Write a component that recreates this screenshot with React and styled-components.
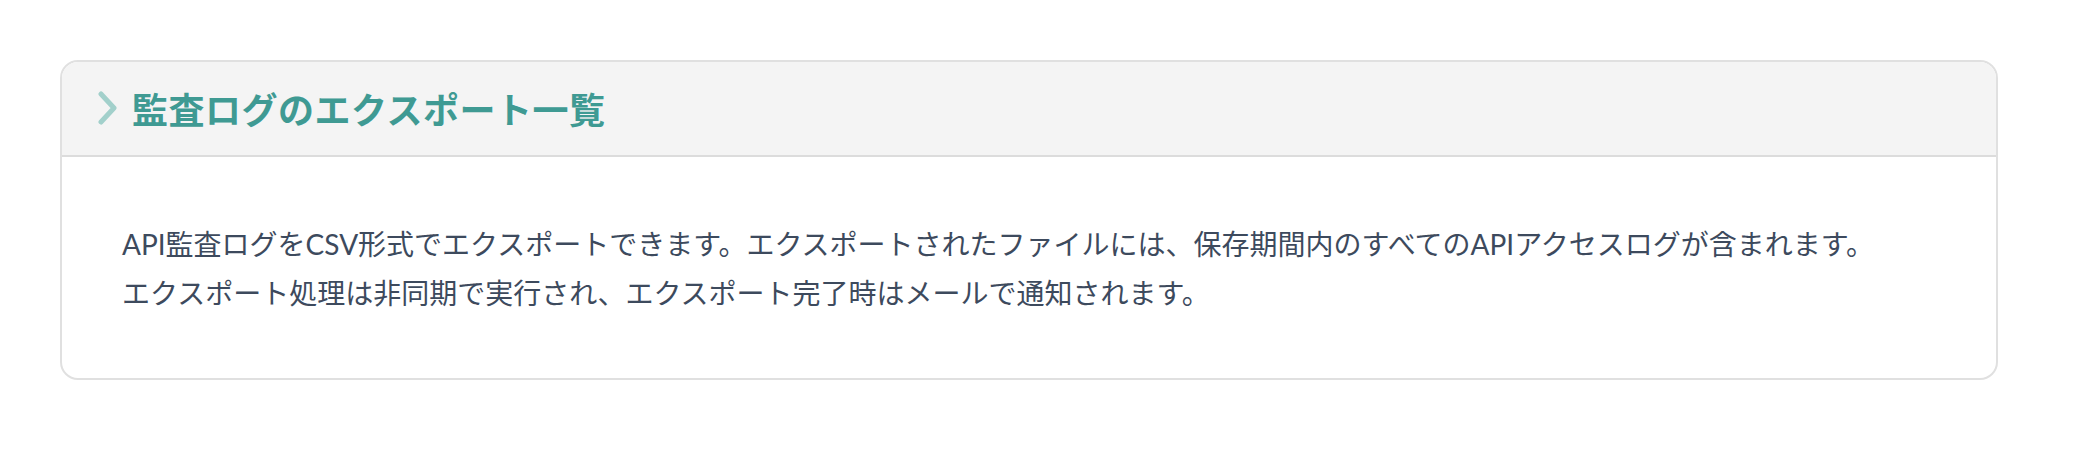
import React from 'react';
import styled, { createGlobalStyle } from 'styled-components';

const GlobalStyle = createGlobalStyle`
  body {
    margin: 0;
    background: #ffffff;
    font-family: Lato, "Noto Sans CJK JP", sans-serif;
  }
`;

const Page = styled.main`
  padding: 60px 88px 60px 60px;
`;

const Card = styled.section`
  border: 2px solid #e0e0e0;
  border-radius: 18px;
  overflow: hidden;
  background: #ffffff;
`;

const Header = styled.header`
  display: flex;
  align-items: center;
  gap: 14px;
  height: 95px;
  padding: 0 0 2px 36px;
  box-sizing: border-box;
  background: #f4f4f4;
  border-bottom: 2px solid #dcdcdc;
`;

const Title = styled.h3`
  margin: 0;
  font-size: 36px;
  font-weight: 700;
  letter-spacing: 0.5px;
  color: #3f9a93;
`;

const Body = styled.div`
  padding: 63px 60px 60px 60px;
`;

const Text = styled.p`
  margin: 0;
  font-size: 28px;
  line-height: 49px;
  color: #3d4a5d;
`;

function Chevron() {
  return (
    <svg width="20" height="34" viewBox="0 0 20 34">
      <path d="M3 3 L16 17 L3 31" fill="none" stroke="#a2d0cb" strokeWidth="5" strokeLinecap="round" strokeLinejoin="round" />
    </svg>
  );
}

export default function App() {
  return (
    <>
      <GlobalStyle />
      <Page>
        <Card>
          <Header>
            <Chevron />
            <Title>監査ログのエクスポート一覧</Title>
          </Header>
          <Body>
            <Text>API監査ログをCSV形式でエクスポートできます。エクスポートされたファイルには、保存期間内のすべてのAPIアクセスログが含まれます。</Text>
            <Text>エクスポート処理は非同期で実行され、エクスポート完了時はメールで通知されます。</Text>
          </Body>
        </Card>
      </Page>
    </>
  );
}
